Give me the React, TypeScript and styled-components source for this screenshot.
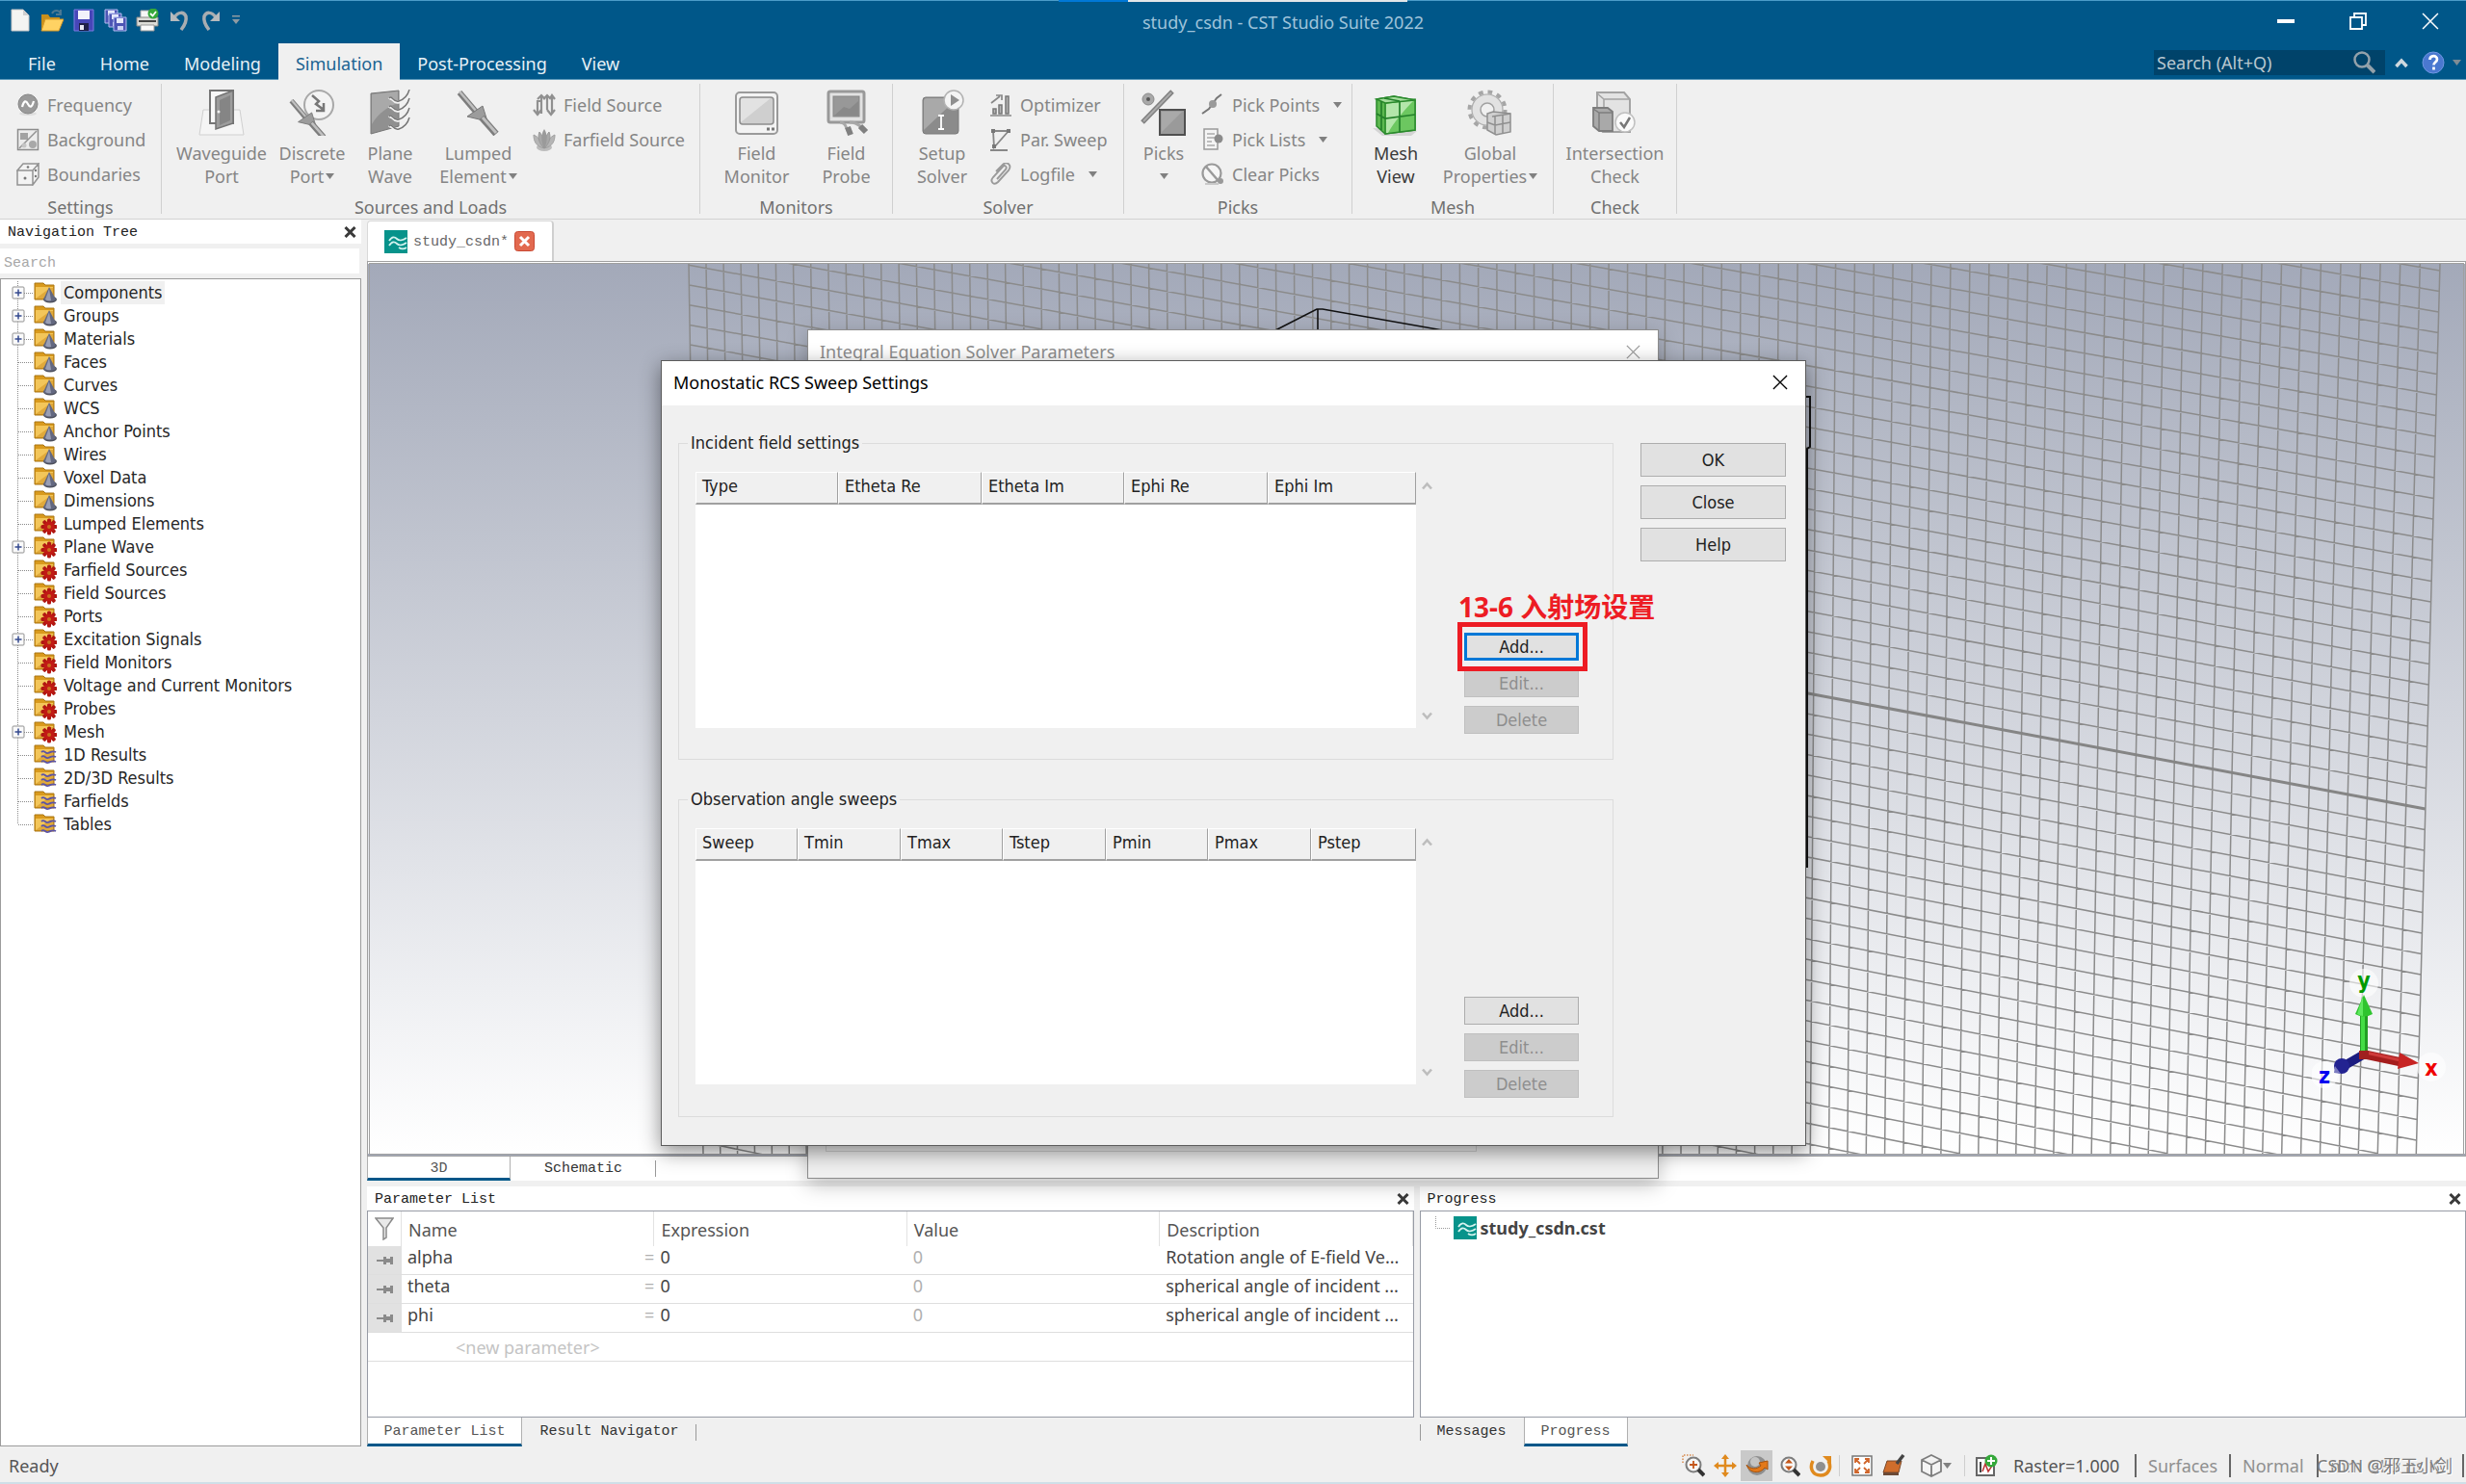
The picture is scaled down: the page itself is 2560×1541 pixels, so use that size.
import React from "react";
import styled, { createGlobalStyle, css } from "styled-components";

const UI = '"Noto Sans", "Open Sans", "Noto Sans CJK SC", sans-serif';
const FORM = '"DejaVu Sans Condensed", "DejaVu Sans", sans-serif';
const MONO = '"Liberation Mono", "DejaVu Sans Mono", monospace';
const BLUE = "#005789";

const GlobalStyle = createGlobalStyle`
  *, *::before, *::after { box-sizing: border-box; }
  body { margin: 0; background: #f0f0f0; }
  button, input { font: inherit; color: inherit; }
  button { background: none; border: 0; padding: 0; margin: 0; }
  svg { display: block; flex: none; }
`;

/* ---------- shell ---------- */

const Shell = styled.div`
  position: relative;
  display: flex;
  flex-direction: column;
  height: 100vh;
  min-height: 1240px;
  overflow: hidden;
  background: #f0f0f0;
  font: 18px/24px ${UI};
  color: #444;
`;

const Accent = styled.div`
  position: absolute;
  top: 0;
  left: 0;
  right: 0;
  height: 2px;
  display: flex;
  justify-content: center;
  border-top: 1px solid #4b9cc9;
`;
const AccentPiece = styled.i<{ $w: number; $c: string }>`
  width: ${(p) => p.$w}px;
  height: 2px;
  margin-top: -1px;
  background: ${(p) => p.$c};
`;

const Header = styled.header`
  background: ${BLUE};
  color: #dbe9f2;
`;
const TitleRow = styled.div`
  display: flex;
  height: 45px;
`;
const QuickBar = styled.div`
  display: flex;
  align-items: center;
  height: 42px;
  padding-left: 4px;
`;
const QuickButton = styled.button<{ $narrow?: boolean }>`
  display: flex;
  justify-content: center;
  width: ${(p) => (p.$narrow ? 20 : 33)}px;
`;
const AppTitle = styled.h1`
  flex: 1;
  margin: 0;
  padding-left: 74px;
  font-size: 18px;
  font-weight: 400;
  line-height: 46px;
  text-align: center;
  color: #9fc3da;
`;
const WindowButton = styled.button`
  display: flex;
  justify-content: center;
  align-items: center;
  width: 75px;
  height: 44px;
`;

const TabRow = styled.div`
  display: flex;
  height: 38px;
  border-bottom: 1px solid #5a98ba;
`;
const RibbonTabs = styled.nav`
  display: flex;
  flex: 1;
`;
const RibbonTab = styled.button<{ $active?: boolean; $file?: boolean }>`
  height: 38px;
  padding: 3px 18px 0;
  ${(p) => p.$file && "padding-left: 29px; padding-right: 28px;"}
  background: ${(p) => (p.$active ? "#f0f0f0" : "transparent")};
  color: ${(p) => (p.$active ? "#1b6492" : "#e6f0f6")};
`;
const CommandTools = styled.div`
  display: flex;
  align-items: center;
  height: 40px;
  padding-right: 2px;
`;
const CommandSearch = styled.label`
  display: flex;
  align-items: center;
  width: 240px;
  height: 26px;
  padding: 0 10px 0 3px;
  background: #00436a;
  input {
    flex: 1;
    min-width: 0;
    padding: 0;
    border: 0;
    background: none;
    color: #b9c7d0;
  }
  input::placeholder { color: #b9c7d0; opacity: 1; }
`;
const ToolButton = styled.button<{ $w: number }>`
  display: flex;
  justify-content: center;
  width: ${(p) => p.$w}px;
`;

/* ---------- ribbon ---------- */

const Ribbon = styled.div`
  display: flex;
  height: 145px;
  border-bottom: 1px solid #d2d2d2;
  color: #858585;
`;
const Group = styled.section<{ $w: number }>`
  display: flex;
  flex-direction: column;
  width: ${(p) => p.$w}px;
  padding-top: 8px;
`;
const GroupBody = styled.div<{ $pad: number }>`
  display: flex;
  flex: 1;
  padding-left: ${(p) => p.$pad}px;
`;
const GroupName = styled.div`
  line-height: 24px;
  text-align: center;
  color: #707070;
`;
const Divider = styled.i`
  width: 1px;
  margin: 4px 0 5px;
  background: #d0d0d0;
`;
const BigButton = styled.button<{ $w: number; $live?: boolean }>`
  width: ${(p) => p.$w}px;
  height: 108px;
  display: flex;
  flex-direction: column;
  align-items: center;
  line-height: 24px;
  color: ${(p) => (p.$live ? "#3a3a3a" : "inherit")};
  > svg:first-child { margin: 2px 0 6px; }
`;
const Line = styled.span`
  display: flex;
  align-items: center;
  gap: 2px;
  height: 24px;
  white-space: nowrap;
`;
const SmallColumn = styled.div<{ $pad?: number }>`
  display: flex;
  flex-direction: column;
  padding-left: ${(p) => p.$pad || 0}px;
`;
const SmallButton = styled.button`
  display: flex;
  align-items: center;
  height: 36px;
  gap: 8px;
  white-space: nowrap;
  svg + span + svg { margin-left: 6px; }
`;

/* ---------- workspace ---------- */

const Workspace = styled.div`
  display: flex;
  flex: 1;
  min-height: 0;
  gap: 6px;
`;
const NavPanel = styled.aside`
  display: flex;
  flex-direction: column;
  width: 375px;
  gap: 5px;
`;
const PanelHeader = styled.div`
  display: flex;
  align-items: center;
  justify-content: space-between;
  height: 25px;
  padding: 0 5px 0 8px;
  background: #fff;
  font: 15px/24px ${MONO};
  color: #222;
`;
const PanelName = styled.h2`
  margin: 0;
  padding-top: 2px;
  font: inherit;
`;
const NavSearch = styled.input`
  height: 26px;
  margin-right: 2px;
  padding: 4px 4px 0;
  border: 0;
  background: #fff;
  font: 15px/22px ${MONO};
  &::placeholder { color: #a8a8a8; opacity: 1; }
`;
const Tree = styled.ul`
  flex: 1;
  margin: 0;
  padding: 2px 0 0 11px;
  list-style: none;
  background: #fff;
  border: 1px solid #9c9c9c;
  font: 18px/24px ${FORM};
  color: #262626;
`;
const TreeItem = styled.li`
  display: flex;
  align-items: center;
  height: 24px;
`;
const TreeLabel = styled.span<{ $current?: boolean }>`
  margin-left: 4px;
  padding: 0 3px;
  background: ${(p) => (p.$current ? "#f0f0f0" : "transparent")};
`;

const MainColumn = styled.main`
  display: flex;
  flex: 1;
  flex-direction: column;
  min-width: 0;
`;
const DocTabs = styled.div`
  display: flex;
  height: 43px;
  padding-top: 1px;
`;
const DocTab = styled.div`
  display: flex;
  align-items: center;
  gap: 6px;
  padding: 0 18px 0 17px;
  background: #fff;
  border: 1px solid #d9d9d9;
  border-right: 2px solid #cfcfcf;
  border-bottom: 0;
  border-radius: 4px 4px 0 0;
  font: 15px/24px ${MONO};
  color: #666;
  span { padding-top: 2px; }
`;
const Viewport = styled.div`
  position: relative;
  flex: 1;
  min-height: 0;
  border: 3px double #a0a0a0;
  background: linear-gradient(#a3a9b9, #ffffff);
  overflow: hidden;
`;
const SceneSvg = styled.svg`
  width: 100%;
  height: 100%;
`;
const Triad = styled.svg`
  position: absolute;
  right: 17px;
  bottom: 64px;
`;
const ViewTabs = styled.div`
  display: flex;
  height: 25px;
  margin-bottom: 6px;
  background: #fff;
`;
const PageTab = styled.button<{ $active?: boolean; $w: number; $edge?: "left" | "right" }>`
  width: ${(p) => p.$w}px;
  font: 15px/22px ${MONO};
  ${(p) =>
    p.$active
      ? css`
          padding-top: 2px;
          background: #fff;
          border: 1px solid #b0b0b0;
          border-top: 0;
          border-bottom: 3px solid ${BLUE};
          color: #555;
        `
      : css`
          color: #333;
          background: linear-gradient(#999, #999) ${p.$edge || "right"} center / 1px 17px no-repeat;
        `}
`;

const Docks = styled.div`
  display: flex;
  gap: 6px;
  height: 270px;
`;
const Dock = styled.section`
  display: flex;
  flex: 1;
  flex-direction: column;
  min-width: 0;
`;
const DockBody = styled.div`
  flex: 1;
  border: 1px solid #979ba5;
  background: #fff;
`;
const DockTabs = styled.div`
  display: flex;
  height: 30px;
`;

const ParamTable = styled.table`
  width: 100%;
  table-layout: fixed;
  border-collapse: separate;
  border-spacing: 0;
  line-height: 24px;
  th, td {
    padding: 0 6px;
    text-align: left;
    font-weight: 400;
    white-space: nowrap;
  }
  th {
    height: 36px;
    padding: 2px 6px 0 7px;
    border-right: 1px solid #e2e2e2;
    color: #555;
  }
  td {
    height: 30px;
    padding-bottom: 6px;
    border-bottom: 1px solid #dedede;
    line-height: 23px;
  }
`;
const IconHead = styled.th`
  && { padding: 0 0 0 7px; }
`;
const PinCell = styled.td`
  && {
    padding: 0 0 0 9px;
    background: #e1e1e1;
  }
`;
const DescCell = styled.td`
  && { padding-right: 0; }
`;
const MutedCell = styled.td`
  color: #b0b0b0;
`;
const NameCell = styled.td`
  && { padding-right: 0; }
`;
const NameLine = styled.div`
  display: flex;
  justify-content: space-between;
  i { font-style: normal; color: #b0b0b0; }
`;
const NewCell = styled.td`
  && {
    height: 30px;
    padding: 2px 0 0 91px;
    color: #c4c4c4;
  }
`;
const ProgressRow = styled.div`
  display: flex;
  align-items: center;
  padding: 5px 0 0 15px;
  gap: 4px;
  font-weight: 700;
  color: #444;
`;

/* ---------- status bar ---------- */

const StatusBar = styled.footer`
  position: relative;
  display: flex;
  align-items: center;
  height: 39px;
  padding: 2px 2px 0 9px;
  border-bottom: 2px solid #cfdfe8;
  color: #555;
`;
const StatusText = styled.span`
  flex: 1;
`;
const StatusButton = styled.button<{ $on?: boolean; $w?: number }>`
  display: flex;
  justify-content: center;
  align-items: center;
  width: ${(p) => p.$w || 33}px;
  height: 32px;
  background: ${(p) => (p.$on ? "#c9c9c9" : "transparent")};
`;
const StatusLine = styled.i`
  width: 1px;
  height: 22px;
  margin: 0 6px 0 3px;
  background: #cfcfcf;
`;
const StatusField = styled.span<{ $w: number; $dim?: boolean }>`
  width: ${(p) => p.$w}px;
  padding-left: 12px;
  border-right: 2px solid #666;
  white-space: nowrap;
  color: ${(p) => (p.$dim ? "#8f8f8f" : "#555")};
`;
const Watermark = styled.span`
  position: absolute;
  right: 14px;
  top: 7px;
  font: 18px/26px ${UI};
  color: #7d7d7d;
  text-shadow: 1px 1px 0 #fff;
`;

/* ---------- dialogs ---------- */

const DialogFrame = styled.section<{ $x: number; $y: number; $w: number; $h?: number; $back?: boolean }>`
  position: absolute;
  left: ${(p) => p.$x}px;
  top: ${(p) => p.$y}px;
  width: ${(p) => p.$w}px;
  ${(p) => p.$h && `height: ${p.$h}px;`}
  display: flex;
  flex-direction: column;
  background: #f0f0f0;
  border: 1px solid ${(p) => (p.$back ? "#8c8c8c" : "#5c5c5c")};
  box-shadow: 0 6px 20px rgba(0, 0, 0, ${(p) => (p.$back ? 0.25 : 0.45)});
`;
const DialogTitle = styled.div<{ $back?: boolean }>`
  display: flex;
  align-items: center;
  justify-content: space-between;
  height: 46px;
  padding: 0 18px 2px 12px;
  background: #fff;
  color: ${(p) => (p.$back ? "#8e8e8e" : "#000")};
  h2 { margin: 0; font: inherit; }
`;
const BackBody = styled.div`
  flex: 1;
  margin: 12px 188px 27px 18px;
  border: 1px solid #d2d2d2;
`;
const DialogBody = styled.div`
  display: flex;
  gap: 28px;
  padding: 28px 20px 29px 17px;
  font: 18px/22px ${FORM};
  color: #222;
`;
const Groups = styled.div`
  display: flex;
  flex: 1;
  flex-direction: column;
  gap: 30px;
`;
const Fieldset = styled.fieldset<{ $end: number }>`
  margin: 0;
  padding: 19px 35px ${(p) => p.$end}px 9px;
  border: 1px solid #dcdcdc;
  legend { padding: 0 3px; line-height: 22px; }
`;
const FieldRow = styled.div<{ $h: number }>`
  display: flex;
  height: ${(p) => p.$h}px;
  padding-left: 8px;
`;
const ListFrame = styled.div`
  flex: 1;
  height: 266px;
  background: #fff;
`;
const ListTable = styled.table`
  width: 100%;
  table-layout: fixed;
  border-collapse: separate;
  border-spacing: 0;
  th {
    height: 34px;
    padding: 0 0 3px 6px;
    text-align: left;
    font-weight: 400;
    background: #f0f0f0;
    border: 1px solid #fff;
    border-right-color: #a0a0a0;
    border-bottom: 2px solid #a0a0a0;
  }
`;
const Gutter = styled.div`
  display: flex;
  flex-direction: column;
  justify-content: space-between;
  align-items: center;
  width: 23px;
  height: 265px;
  padding: 10px 0 7px;
  margin-right: 27px;
`;
const ButtonStack = styled.div`
  display: flex;
  flex-direction: column;
  justify-content: flex-end;
  width: 119px;
  gap: 9px;
`;
const SideButtons = styled.div`
  display: flex;
  flex-direction: column;
  gap: 9px;
  width: 151px;
  padding-top: 11px;
`;
const PushButton = styled.button<{ $h?: number; $focus?: boolean }>`
  width: 100%;
  height: ${(p) => p.$h || 29}px;
  border: 1px solid #adadad;
  background: #e1e1e1;
  line-height: 22px;
  ${(p) => p.$focus && "border: 3px solid #0078d7;"}
  &:disabled {
    border-color: #bfbfbf;
    background: #cccccc;
    color: #8e8e8e;
  }
`;
const Marked = styled.div`
  position: relative;
`;
const MarkBox = styled.i`
  position: absolute;
  z-index: 1;
  inset: -11px -9px -11px -7px;
  border: 5px solid #ed1c24;
  pointer-events: none;
`;
const MarkText = styled.strong`
  position: absolute;
  left: -6px;
  bottom: 39px;
  font: 700 28px/34px "Noto Sans", "Noto Sans CJK SC", sans-serif;
  color: #ed1c24;
  white-space: nowrap;
`;

/* ---------- icons ---------- */

const Caret = ({ c = "#808080" }: { c?: string }) => (
  <svg width="9" height="6" viewBox="0 0 9 6"><path d="M0 0h9L4.500 6z" fill={c} /></svg>
);
const BoldX = () => (
  <svg width="13" height="12" viewBox="0 0 13 12"><path d="M1.500 1l10 10M11.500 1l-10 10" stroke="#3a3a3a" strokeWidth="3" /></svg>
);
const ThinX = ({ c, s = 17 }: { c: string; s?: number }) => (
  <svg width={s} height={s} viewBox="0 0 17 17"><path d="M1 1l15 15M16 1L1 16" stroke={c} strokeWidth="1.400" /></svg>
);
const Chevron = ({ down }: { down?: boolean }) => (
  <svg width="11" height="9" viewBox="0 0 11 9">
    <path d={down ? "M1 1.500l4.500 5 4.500-5" : "M1 7.500l4.500-5 4.500 5"} fill="none" stroke="#bdbdbd" strokeWidth="2.600" />
  </svg>
);
const Small = ({ children, s = 24 }: { children: React.ReactNode; s?: number }) => (
  <svg width={s} height={s} viewBox="0 0 24 24" fill="none">{children}</svg>
);
const Big = ({ children }: { children: React.ReactNode }) => (
  <svg width="48" height="48" viewBox="0 0 48 48" fill="none">{children}</svg>
);

const CstLogo = () => (
  <svg width="24" height="24" viewBox="0 0 24 24" fill="none">
    <path d="M0 0h24v24H0z" fill="#07938b" />
    <path d="M5 11c3-5 6-4 8-2s6 2 10-1" stroke="#d5f3ef" strokeWidth="1.800" />
    <path d="M5 16c3-5 6-4 8-2s6 2 10-1" stroke="#d5f3ef" strokeWidth="1.800" />
    <path d="M15 18c3 2 5 2 8 0" stroke="#d5f3ef" strokeWidth="1.800" />
  </svg>
);

const NewIcon = () => <Small><path d="M3 1h12l6 6v16H3z" fill="#f4f4f2" stroke="#c8c8c8" /><path d="M15 1v6h6z" fill="#cfcfcf" /></Small>;
const OpenIcon = () => (
  <Small>
    <path d="M1 6h7l2 3h10v13H1z" fill="#c88f1c" />
    <path d="M5 11h19l-5 12H1z" fill="#ffd263" stroke="#d89c28" />
    <path d="M12 5c2-4 7-4 9 0M21 1v5h-5" stroke="#4b7893" strokeWidth="2" />
  </Small>
);
const SaveIcon = () => (
  <Small>
    <path d="M2 1h20v22H2z" fill="#4746b8" stroke="#7a7ae0" />
    <path d="M6 2h12v9H6z" fill="#f2f2fb" /><path d="M7 15h10v8H7z" fill="#20204a" /><path d="M8 17h4v5H8z" fill="#e8e8f5" />
  </Small>
);
const SaveAllIcon = () => (
  <Small>
    {[[1, 1], [5, 5], [10, 9]].map(([x, y]) => (
      <g key={x}><path d={`M${x} ${y}h13v14h-13z`} fill="#4d55b5" stroke="#b4bdf0" /><path d={`M${x + 3} ${y + 1}h7v5h-7z`} fill="#e4e8fb" /><path d={`M${x + 4} ${y + 9}h6v4h-6z`} fill="#cbd2f4" /></g>
    ))}
  </Small>
);
const PrintIcon = () => (
  <Small>
    <path d="M5 2h11v8H5z" fill="#f6f6f6" stroke="#aaa" /><path d="M1 9h22v9H1z" fill="#dcdcd8" stroke="#8a8a86" />
    <path d="M3 12h18v2H3z" fill="#444" /><path d="M5 17h14v6H5z" fill="#fafafa" stroke="#999" />
    <circle cx="18" cy="5" r="5.500" fill="#35a83a" /><path d="M15 5l2.500 2.500L21 3" stroke="#fff" strokeWidth="1.800" />
  </Small>
);
const UndoIcon = ({ flip }: { flip?: boolean }) => (
  <Small>
    <g transform={flip ? "translate(24 0) scale(-1 1)" : undefined}>
      <path d="M7 9c4-6 10-6 12-1 1 5-1 9-5 14" stroke="#a8adb1" strokeWidth="3.500" />
      <path d="M3 3v10h10z" fill="#b6babd" />
    </g>
  </Small>
);

const quick: [string, React.ReactNode][] = [
  ["New", <NewIcon />], ["Open", <OpenIcon />], ["Save", <SaveIcon />], ["Save all", <SaveAllIcon />],
  ["Print", <PrintIcon />], ["Undo", <UndoIcon />], ["Redo", <UndoIcon flip />],
];

const FrequencyIcon = () => <Small><ellipse cx="12" cy="21" rx="9" ry="2" fill="#dedede" /><circle cx="12" cy="11" r="10" fill="#9a9a9a" stroke="#858585" /><path d="M6 14c2-7 4-7 6-3s4 4 6-3" stroke="#fff" strokeWidth="2.200" /></Small>;
const BackgroundIcon = () => <Small><path d="M1.500 1.500h21v21h-21z" fill="#ececec" stroke="#8c8c8c" strokeWidth="1.500" /><path d="M4 5h8v7H4z" fill="#a2a2a2" /><path d="M3 21L21 3" stroke="#909090" strokeWidth="1.500" /><circle cx="17" cy="17" r="4" fill="#a8a8a8" /><circle cx="8" cy="18" r="2.500" fill="#c6c6c6" /></Small>;
const BoundariesIcon = () => <Small><path d="M1 8l6-7h16l-6 7zM1 8h16v15H1zM17 8l6-7v14l-6 8z" fill="#f3f3f3" stroke="#939393" strokeWidth="1.500" /><circle cx="9" cy="16" r="1.500" fill="#777" /><circle cx="12" cy="4.500" r="1.300" fill="#777" /><circle cx="20" cy="8" r="1.200" fill="#777" /><circle cx="20" cy="14" r="1.200" fill="#777" /></Small>;
const WaveguideIcon = () => (
  <Big>
    <path d="M5 21h38l4 26H1z" fill="#f5f5f5" stroke="#d0d0d0" />
    <path d="M12 1h24v34H12z" fill="#f8f8f8" stroke="#757575" strokeWidth="2" />
    <path d="M18 8L36 1v34l-18 6z" fill="#9c9c9c" stroke="#737373" strokeWidth="1.500" />
    <path d="M22 11l11-5v26l-11 5z" fill="#858585" /><circle cx="21" cy="23" r="1.500" fill="#f2f2f2" />
  </Big>
);
const Probe = () => (
  <>
    <path d="M4 3l17 20" stroke="#7d7d7d" strokeWidth="6" /><path d="M4 2l17 20" stroke="#c0c0c0" strokeWidth="2.500" />
    <path d="M12 28l16-11 5 16z" fill="#9c9c9c" stroke="#777" />
    <path d="M27 29l15 17" stroke="#7d7d7d" strokeWidth="7" /><path d="M28 29l14 16" stroke="#c0c0c0" strokeWidth="3" />
  </>
);
const DiscreteIcon = () => (
  <Big>
    <circle cx="31" cy="16" r="15" fill="#f3f3f3" stroke="#a8a8a8" strokeWidth="2" />
    <path d="M24 6l7 6-3 3 8 6M36 14v8h-8" stroke="#777" strokeWidth="2.500" />
    <g transform="translate(-1 9) scale(.88)"><Probe /></g>
  </Big>
);
const PlaneWaveIcon = () => (
  <Big>
    <path d="M4 4l29-3v37L4 46z" fill="#909090" stroke="#767676" /><path d="M5 5l27-3v12C22 18 12 24 5 36z" fill="#a9a9a9" />
    {[1, 10, 20, 30].map((y) => <path key={y} d={`M23 ${y + 9}c3-4 4 5 10 3s9-5 11-12`} stroke="#f2f2f2" strokeWidth="3" />)}
    {[1, 10, 20, 30].map((y) => <path key={y} d={`M23 ${y + 8}c3-4 4 5 10 3s9-5 11-12`} stroke="#757575" strokeWidth="1.500" />)}
  </Big>
);
const LumpedIcon = () => <Big><Probe /></Big>;
const FieldSourceIcon = () => <Small><g stroke="#909090" strokeWidth="2.200"><path d="M5 21V8h4V3M20 21v-8M9 21V6M15 17V3M20 3v10" /><path d="M5 6l4-4 4 4M11 6l4-4 3 3 2-3 3 4M1 17l4 5 4-5M15 17l4 5 4-5" /></g></Small>;
const FarfieldIcon = () => (
  <Small>
    <ellipse cx="12" cy="20" rx="8" ry="4" fill="#bcbcbc" />
    <path d="M12 21C3 19 1 13 1 7c5 2 9 8 11 14zM12 21c9-2 11-8 11-14-5 2-9 8-11 14z" fill="#b5b5b5" stroke="#a0a0a0" />
    <path d="M12 21C6 15 5 9 7 4c3 3 5 10 5 17zM12 21c6-6 7-12 5-17-3 3-5 10-5 17z" fill="#a8a8a8" stroke="#989898" />
    <path d="M12 21C8 14 9 5 12 1c3 4 4 13 0 20z" fill="#9a9a9a" />
  </Small>
);
const MonitorIcon = () => <Big><rect x="2" y="3" width="43" height="43" rx="4" fill="#f3f3f3" stroke="#9a9a9a" strokeWidth="2" /><rect x="6" y="8" width="35" height="28" rx="3" fill="#cfcfcf" stroke="#8d8d8d" strokeWidth="1.500" /><path d="M7 34L38 9H9q-2 0-2 2z" fill="#e2e2e2" /><path d="M34 41h3M39 41h3" stroke="#777" strokeWidth="3" /></Big>;
const FieldProbeIcon = () => <Big><rect x="5" y="2" width="37" height="32" rx="2" fill="#e2e2e2" stroke="#999" strokeWidth="3" /><rect x="10" y="7" width="27" height="21" fill="#989898" stroke="#858585" /><path d="M11 27l10-9 6 2 9-8v15z" fill="#898989" /><path d="M17 34c5 0 6 4 8 9M27 34c6 0 8 2 14 6" stroke="#a8a8a8" strokeWidth="3" /><path d="M25 39l3 8M38 38l6 6" stroke="#808080" strokeWidth="6" /></Big>;
const SetupIcon = () => <Big><rect x="4" y="8" width="37" height="38" rx="3" fill="#8b8b8b" stroke="#7a7a7a" /><path d="M5 42L40 9H8q-3 0-3 3z" fill="#a9a9a9" /><path d="M20 27h6M23 27v14M20 41h6" stroke="#fff" strokeWidth="1.800" /><circle cx="36" cy="11" r="10" fill="#f4f4f4" stroke="#b2b2b2" strokeWidth="1.500" /><path d="M33 5l9 6-9 6z" fill="#8f8f8f" /></Big>;
const OptimizerIcon = () => <Small><path d="M4 16h3v5H4zM10 12h3v9h-3zM17 3h3v18h-3z" fill="#b5b5b5" stroke="#777" strokeWidth="1.500" /><path d="M2 10l9-7M7 2h6v5M1 23h22" stroke="#888" strokeWidth="1.700" /></Small>;
const SweepIcon = () => <Small><path d="M4 3h16L5 20zM1 23h18" stroke="#888" strokeWidth="1.800" /><path d="M2 1h4v4H2zM18 1h4v4h-4zM3 17h4v4H3z" fill="#777" /></Small>;
const ClipIcon = () => <Small><path d="M8 17l9-10c2-3-1-5-3-3L4 15c-4 5 1 9 5 5L20 8c4-6-2-10-6-6L7 9" stroke="#9a9a9a" strokeWidth="1.900" /></Small>;
const PicksIcon = () => <Big><circle cx="8" cy="10" r="6" fill="#a8a8a8" stroke="#8a8a8a" /><circle cx="8" cy="10" r="2" fill="#555" /><path d="M2 34L33 2" stroke="#808080" strokeWidth="5" /><path d="M3 33L32 3" stroke="#aaa" strokeWidth="2" /><path d="M20 21h26v26H20z" fill="#9a9a9a" stroke="#505050" strokeWidth="2" /><path d="M22 44V23h21z" fill="#a9a9a9" /></Big>;
const PickPointsIcon = () => <Small><path d="M1 21l7-5 8-11 5-4" stroke="#777" strokeWidth="2" /><circle cx="12" cy="11" r="4" fill="#9a9a9a" /></Small>;
const PickListsIcon = () => <Small><path d="M3 1h14v21H3z" fill="#f4f4f4" stroke="#999" strokeWidth="1.500" /><path d="M6 6h8M6 10h8M6 14h5M6 18h8" stroke="#aaa" strokeWidth="1.500" /><circle cx="18" cy="11" r="4.500" fill="#8b8b8b" /></Small>;
const ClearIcon = () => <Small><circle cx="11" cy="11" r="9.500" fill="#f5f5f5" stroke="#999" strokeWidth="2.200" /><path d="M5 4l13 15" stroke="#999" strokeWidth="2.500" /><circle cx="20" cy="19" r="3" fill="#999" /><path d="M4 22h14" stroke="#c9c9c9" strokeWidth="2" /></Small>;
const MeshIcon = () => (
  <Big>
    <path d="M0 40l10 8h30l6-5z" fill="#d4d4d4" />
    <path d="M4 10l18-3 22 4v31L13 46 4 38z" fill="#5cb84f" stroke="#2a8a2c" strokeWidth="1.500" />
    <path d="M13 14l31-4v32l-31 4z" fill="#6cc760" stroke="#2a8a2c" strokeWidth="1.500" />
    <path d="M14 15l29-4C34 20 22 34 16 45h-2z" fill="#b3e6aa" />
    <path d="M4 10l18-3 22 4-31 3z" fill="#a5dd9c" stroke="#2a8a2c" strokeWidth="1.500" />
    <path d="M28 12v32M4 25l9 5 31-4M9 12v30M12 9l16 3" stroke="#23802a" strokeWidth="1.700" />
  </Big>
);
const GlobalIcon = () => (
  <Big>
    <circle cx="21" cy="21" r="18" stroke="#a6a6a6" strokeWidth="5" strokeDasharray="4.600 4.820" />
    <circle cx="21" cy="21" r="12" stroke="#e2e2e2" strokeWidth="9" /><circle cx="21" cy="21" r="16" stroke="#adadad" strokeWidth="1.200" /><circle cx="21" cy="21" r="7" stroke="#a0a0a0" strokeWidth="1.500" />
    <path d="M21 25l6-2 18 2v19l-15 3-9-5z" fill="#cfcfcf" stroke="#909090" strokeWidth="1.500" /><path d="M26 28l19-3M29 27v19M37 26v19M21 34l8 3 16-3" stroke="#8f8f8f" strokeWidth="1.500" />
  </Big>
);
const IntersectIcon = () => (
  <Big>
    <path d="M5 3h28l6 7v34H11L5 38z" fill="#e3e3e3" stroke="#a3a3a3" strokeWidth="2" /><path d="M5 4l7 6h27M12 10v33" stroke="#a3a3a3" strokeWidth="1.500" />
    <path d="M1 19h15l5 4v20H7l-6-5z" fill="#a9a9a9" stroke="#7d7d7d" strokeWidth="1.800" /><path d="M1 20l6 4h14M7 24v18" stroke="#7d7d7d" strokeWidth="1.500" />
    <circle cx="34" cy="34" r="10" fill="#fafafa" stroke="#c0c0c0" strokeWidth="1.500" /><path d="M29 34l4 5 6-10" stroke="#777" strokeWidth="2.500" />
  </Big>
);

const FolderIcon = ({ kind }: { kind: string }) => (
  <svg width="24" height="24" viewBox="0 0 24 24" fill="none">
    <path d="M1 2h9l2 2h9v15H1z" fill="#d99a1d" stroke="#a97413" />
    <path d="M2 6h18v12H2z" fill="#f3c65a" /><path d="M2 18L17 7h3v11z" fill="#e0a93a" />
    {kind === "cone" && <><ellipse cx="17" cy="19" rx="7" ry="3.500" fill="#4c4f5b" /><path d="M16 6L10 19c3 3 10 3 13 0z" fill="#636880" /><path d="M16 8l-4 11c2 1.500 4 1.500 6 1z" fill="#9a9fb4" /></>}
    {kind === "gear" && (
      <>
        <g fill="#b01712">
          {[0, 45, 90, 135].map((a) => <rect key={a} x="14" y="6.500" width="4" height="17" rx="1.500" transform={`rotate(${a} 16 15)`} />)}
        </g>
        <circle cx="16" cy="15" r="5.500" fill="#c11a15" /><circle cx="16" cy="15" r="2" fill="#c9731f" />
      </>
    )}
    {kind === "wave" && [8, 13, 18].map((y) => <path key={y} d={`M8 ${y + 1}c3-3 4 2 7 1s4-3 8-1`} stroke="#5b53a6" strokeWidth="1.800" />)}
  </svg>
);
const Guide = ({ plus, last }: { plus: boolean; last: boolean }) => (
  <svg width="23" height="24" viewBox="0 0 23 24" fill="none">
    <path d={`M6.500 0V${last ? 12 : 24}M7 12.500h16`} stroke="#8a8a8a" strokeDasharray="1 1" />
    {plus && <><rect x="1" y="6" width="12" height="12" rx="1" fill="#fafafa" stroke="#919191" /><path d="M3.500 12h7M7 8.500v7" stroke="#34498f" strokeWidth="1.500" /></>}
  </svg>
);

/* ---------- 3D scene ---------- */

const SceneGrid = () => {
  const W = 2173;
  const H = 924;
  const cols = Array.from({ length: 95 }, (_, i) => {
    const top = 331 + 18 * i + 0.01426 * i * i;
    const bottom = 346 + 17.8 * i + 0.0119 * i * i;
    return `M${top.toFixed(1)} 0L${bottom.toFixed(1)} ${H}`;
  }).join("");
  const rowPath = (j: number) => {
    const yl = 229 + 20.7 * j;
    const yr = 566 + 21.5 * j;
    const xl = 331 + (15 * yl) / H;
    const xr = 2149 - (25 * yr) / H;
    return `M${xl.toFixed(1)} ${yl.toFixed(1)}L${xr.toFixed(1)} ${yr.toFixed(1)}`;
  };
  const rows = Array.from({ length: 62 }, (_, k) => rowPath(k - 27)).join("");
  return (
    <SceneSvg viewBox={`0 0 ${W} ${H}`} preserveAspectRatio="none" fill="none">
      <path d={cols + rows} stroke="#8b8b8b" strokeWidth="1.500" />
      <path d={rowPath(0)} stroke="#858585" strokeWidth="3" />
      <path d="M940 69l43-22h6l125 22M984 47v40" stroke="#111" strokeWidth="1.600" />
      <path d="M1480 138h15v52l-3 2v435" stroke="#111" strokeWidth="2" />
    </SceneSvg>
  );
};

const AxisTriad = () => (
  <Triad width="140" height="130" viewBox="0 0 140 130" fill="none">
    <circle cx="54" cy="17" r="15" fill="#fff" opacity=".6" /><circle cx="124" cy="104" r="15" fill="#fff" opacity=".6" /><circle cx="13" cy="112" r="14" fill="#fff" opacity=".6" />
    <path d="M54 91V48" stroke="#23a023" strokeWidth="8" /><path d="M53 91V48" stroke="#45dd45" strokeWidth="4" />
    <path d="M54 29l9 20q-9 5-18 0z" fill="#2fc42f" /><path d="M53 30l-6 19q3 2 6 2z" fill="#5fe85f" />
    <path d="M55 91l38 8" stroke="#a51d1d" strokeWidth="9" /><path d="M56 89l36 8" stroke="#cf3b3b" strokeWidth="3" />
    <path d="M91 89l20 11-22 6z" fill="#c72424" />
    <path d="M52 92L33 103" stroke="#1c1c80" strokeWidth="9" /><circle cx="31" cy="103" r="8" fill="#232391" /><path d="M24 103l6 8-7-1z" fill="#7b7bc0" />
    <path d="M49 87h10v9H49z" fill="#a02020" />
    <g fontFamily='"DejaVu Sans Condensed", "DejaVu Sans", sans-serif' fontSize="23" fontWeight="700" textAnchor="middle">
      <text x="54" y="22" fill="#009a00">y</text>
      <text x="124" y="113" fill="#f00000">x</text>
      <text x="13" y="121" fill="#0000f0">z</text>
    </g>
  </Triad>
);

/* ---------- data ---------- */

const treeItems: [string, string, boolean?][] = [
  ["Components", "cone", true], ["Groups", "cone", true], ["Materials", "cone", true], ["Faces", "cone"],
  ["Curves", "cone"], ["WCS", "cone"], ["Anchor Points", "cone"], ["Wires", "cone"], ["Voxel Data", "cone"],
  ["Dimensions", "cone"], ["Lumped Elements", "gear"], ["Plane Wave", "gear", true], ["Farfield Sources", "gear"],
  ["Field Sources", "gear"], ["Ports", "gear"], ["Excitation Signals", "gear", true], ["Field Monitors", "gear"],
  ["Voltage and Current Monitors", "gear"], ["Probes", "gear"], ["Mesh", "gear", true], ["1D Results", "wave"],
  ["2D/3D Results", "wave"], ["Farfields", "wave"], ["Tables", "wave"],
];

const params = [
  ["alpha", "Rotation angle of E-field Ve..."],
  ["theta", "spherical angle of incident ..."],
  ["phi", "spherical angle of incident ..."],
];

const Tool = ({ icon, w, lines, arrow, live }: { icon: React.ReactNode; w: number; lines: string[]; arrow?: boolean; live?: boolean }) => (
  <BigButton $w={w} $live={live}>
    {icon}
    {lines.map((t, i) => <Line key={i}>{t}{arrow && i === lines.length - 1 && <Caret />}</Line>)}
  </BigButton>
);
const MiniTool = ({ icon, text, arrow }: { icon: React.ReactNode; text: string; arrow?: boolean }) => (
  <SmallButton>{icon}<span>{text}</span>{arrow && <Caret />}</SmallButton>
);

const SweepList = ({ columns, widths }: { columns: string[]; widths: number[] }) => (
  <>
    <ListFrame>
      <ListTable>
        <colgroup>{columns.map((c, i) => <col key={c} width={widths[i]} />)}</colgroup>
        <thead><tr>{columns.map((c) => <th key={c}>{c}</th>)}</tr></thead>
      </ListTable>
    </ListFrame>
    <Gutter><Chevron /><Chevron down /></Gutter>
  </>
);

const ZoomGlyph = ({ children }: { children?: React.ReactNode }) => (
  <Small><circle cx="12" cy="11" r="7.500" fill="#f7f7f7" stroke="#7d7d7d" strokeWidth="2" /><path d="M17 16l6 6" stroke="#333" strokeWidth="4" />{children}</Small>
);

export default function App() {
  return (
    <Shell>
      <GlobalStyle />
      <Header>
        <TitleRow>
          <QuickBar>
            {quick.map(([name, icon]) => <QuickButton key={name} aria-label={name}>{icon}</QuickButton>)}
            <QuickButton $narrow aria-label="Customize">
              <svg width="8" height="10" viewBox="0 0 8 10"><path d="M0 0h8v1.500H0zM0 4h8L4 9z" fill="#8f9ba2" /></svg>
            </QuickButton>
          </QuickBar>
          <AppTitle>study_csdn - CST Studio Suite 2022</AppTitle>
          <WindowButton aria-label="Minimize"><svg width="18" height="4"><path d="M0 0h18v4H0z" fill="#fff" /></svg></WindowButton>
          <WindowButton aria-label="Restore"><svg width="18" height="18" viewBox="0 0 18 18" fill="none" stroke="#fff" strokeWidth="1.800"><path d="M1 5h12v12H1zM5 5V1h12v12h-4" /></svg></WindowButton>
          <WindowButton aria-label="Close"><ThinX c="#fff" s={18} /></WindowButton>
        </TitleRow>
        <TabRow>
          <RibbonTabs>
            <RibbonTab $file>File</RibbonTab>
            <RibbonTab>Home</RibbonTab>
            <RibbonTab>Modeling</RibbonTab>
            <RibbonTab $active>Simulation</RibbonTab>
            <RibbonTab>Post-Processing</RibbonTab>
            <RibbonTab>View</RibbonTab>
          </RibbonTabs>
          <CommandTools>
            <CommandSearch>
              <input aria-label="Search commands" placeholder="Search (Alt+Q)" />
              <Small><circle cx="10" cy="9" r="7.500" stroke="#93a1aa" strokeWidth="2.500" /><path d="M15 14l8 8" stroke="#93a1aa" strokeWidth="4" /></Small>
            </CommandSearch>
            <ToolButton $w={34} aria-label="Collapse ribbon"><svg width="14" height="11" viewBox="0 0 14 11"><path d="M1.500 9L7 3l5.500 6" fill="none" stroke="#cfd9df" strokeWidth="3.500" /></svg></ToolButton>
            <ToolButton $w={32} aria-label="Help">
              <Small><circle cx="12" cy="12" r="11" fill="#4a78d0" stroke="#6f97e2" /><path d="M8.500 9c0-5 7.500-5 7.500-.5 0 3-3.500 3-3.500 6M12.500 16.500v3" stroke="#fff" strokeWidth="2.700" /></Small>
            </ToolButton>
            <ToolButton $w={16} aria-label="Help options"><Caret c="#7f8c94" /></ToolButton>
          </CommandTools>
        </TabRow>
      </Header>
      <Accent><AccentPiece $w={72} $c="#0078d7" /><AccentPiece $w={290} $c="#e3e6e8" /></Accent>

      <Ribbon>
        <Group $w={167}>
          <GroupBody $pad={17}>
            <SmallColumn>
              <MiniTool icon={<FrequencyIcon />} text="Frequency" />
              <MiniTool icon={<BackgroundIcon />} text="Background" />
              <MiniTool icon={<BoundariesIcon />} text="Boundaries" />
            </SmallColumn>
          </GroupBody>
          <GroupName>Settings</GroupName>
        </Group>
        <Divider />
        <Group $w={558}>
          <GroupBody $pad={7}>
            <Tool w={110} icon={<WaveguideIcon />} lines={["Waveguide", "Port"]} />
            <Tool w={78} icon={<DiscreteIcon />} lines={["Discrete", "Port"]} arrow />
            <Tool w={84} icon={<PlaneWaveIcon />} lines={["Plane", "Wave"]} />
            <Tool w={99} icon={<LumpedIcon />} lines={["Lumped", "Element"]} arrow />
            <SmallColumn $pad={7}>
              <MiniTool icon={<FieldSourceIcon />} text="Field Source" />
              <MiniTool icon={<FarfieldIcon />} text="Farfield Source" />
            </SmallColumn>
          </GroupBody>
          <GroupName>Sources and Loads</GroupName>
        </Group>
        <Divider />
        <Group $w={199}>
          <GroupBody $pad={12}>
            <Tool w={93} icon={<MonitorIcon />} lines={["Field", "Monitor"]} />
            <Tool w={93} icon={<FieldProbeIcon />} lines={["Field", "Probe"]} />
          </GroupBody>
          <GroupName>Monitors</GroupName>
        </Group>
        <Divider />
        <Group $w={239}>
          <GroupBody $pad={5}>
            <Tool w={92} icon={<SetupIcon />} lines={["Setup", "Solver"]} />
            <SmallColumn $pad={3}>
              <MiniTool icon={<OptimizerIcon />} text="Optimizer" />
              <MiniTool icon={<SweepIcon />} text="Par. Sweep" />
              <MiniTool icon={<ClipIcon />} text="Logfile" arrow />
            </SmallColumn>
          </GroupBody>
          <GroupName>Solver</GroupName>
        </Group>
        <Divider />
        <Group $w={236}>
          <GroupBody $pad={2}>
            <Tool w={78} icon={<PicksIcon />} lines={["Picks", ""]} arrow />
            <SmallColumn>
              <MiniTool icon={<PickPointsIcon />} text="Pick Points" arrow />
              <MiniTool icon={<PickListsIcon />} text="Pick Lists" arrow />
              <MiniTool icon={<ClearIcon />} text="Clear Picks" />
            </SmallColumn>
          </GroupBody>
          <GroupName>Picks</GroupName>
        </Group>
        <Divider />
        <Group $w={208}>
          <GroupBody $pad={4}>
            <Tool w={82} icon={<MeshIcon />} lines={["Mesh", "View"]} live />
            <Tool w={114} icon={<GlobalIcon />} lines={["Global", "Properties"]} arrow />
          </GroupBody>
          <GroupName>Mesh</GroupName>
        </Group>
        <Divider />
        <Group $w={127}>
          <GroupBody $pad={0}>
            <Tool w={127} icon={<IntersectIcon />} lines={["Intersection", "Check"]} />
          </GroupBody>
          <GroupName>Check</GroupName>
        </Group>
        <Divider />
      </Ribbon>

      <Workspace>
        <NavPanel>
          <PanelHeader><PanelName>Navigation Tree</PanelName><button aria-label="Close navigation tree"><BoldX /></button></PanelHeader>
          <NavSearch aria-label="Search tree" placeholder="Search" />
          <Tree>
            {treeItems.map(([name, kind, plus], i) => (
              <TreeItem key={name}>
                <Guide plus={!!plus} last={i === treeItems.length - 1} />
                <FolderIcon kind={kind} />
                <TreeLabel $current={i === 0}>{name}</TreeLabel>
              </TreeItem>
            ))}
          </Tree>
        </NavPanel>

        <MainColumn>
          <DocTabs>
            <DocTab>
              <CstLogo />
              <span>study_csdn*</span>
              <button aria-label="Close document">
                <svg width="21" height="21" viewBox="0 0 21 21"><rect x=".5" y=".5" width="20" height="20" rx="3" fill="#e2694f" stroke="#c94a35" /><path d="M6 6l9 9M15 6l-9 9" stroke="#fff" strokeWidth="3" /></svg>
              </button>
            </DocTab>
          </DocTabs>
          <Viewport><SceneGrid /><AxisTriad /></Viewport>
          <ViewTabs>
            <PageTab $active $w={149}>3D</PageTab>
            <PageTab $w={151}>Schematic</PageTab>
          </ViewTabs>
          <Docks>
            <Dock>
              <PanelHeader><PanelName>Parameter List</PanelName><button aria-label="Close parameter list"><BoldX /></button></PanelHeader>
              <DockBody>
                <ParamTable>
                  <colgroup><col width={35} /><col /><col /><col /><col /></colgroup>
                  <thead>
                    <tr>
                      <IconHead aria-label="Filter"><svg width="20" height="24" viewBox="0 0 20 24"><path d="M1 1h18l-7 10v10l-3 2V11z" fill="#e9e9e9" stroke="#8a8a8a" strokeWidth="1.500" /></svg></IconHead>
                      <th>Name</th><th>Expression</th><th>Value</th><th>Description</th>
                    </tr>
                  </thead>
                  <tbody>
                    {params.map(([name, desc]) => (
                      <tr key={name}>
                        <PinCell><svg width="18" height="11" viewBox="0 0 18 11"><path d="M0 5h7v2H0zM7 2h3v2h4V2h3v8h-3V8h-4v2H7z" fill="#8a8a8a" /></svg></PinCell>
                        <NameCell><NameLine>{name}<i>=</i></NameLine></NameCell>
                        <td>0</td>
                        <MutedCell>0</MutedCell>
                        <DescCell>{desc}</DescCell>
                      </tr>
                    ))}
                    <tr><NewCell colSpan={5}>&lt;new parameter&gt;</NewCell></tr>
                  </tbody>
                </ParamTable>
              </DockBody>
              <DockTabs>
                <PageTab $active $w={161}>Parameter List</PageTab>
                <PageTab $w={181}>Result Navigator</PageTab>
              </DockTabs>
            </Dock>
            <Dock>
              <PanelHeader><PanelName>Progress</PanelName><button aria-label="Close progress"><BoldX /></button></PanelHeader>
              <DockBody>
                <ProgressRow>
                  <svg width="15" height="24" viewBox="0 0 15 24" fill="none"><path d="M.5 0v12.500H15" stroke="#9a9a9a" strokeDasharray="1 1" /></svg>
                  <CstLogo />
                  <span>study_csdn.cst</span>
                </ProgressRow>
              </DockBody>
              <DockTabs>
                <PageTab $w={108} $edge="left">Messages</PageTab>
                <PageTab $active $w={108}>Progress</PageTab>
              </DockTabs>
            </Dock>
          </Docks>
        </MainColumn>
      </Workspace>

      <StatusBar>
        <StatusText>Ready</StatusText>
        <StatusButton aria-label="Zoom window"><ZoomGlyph><path d="M1 9V1h11" stroke="#d88a4d" strokeWidth="1.500" strokeDasharray="1.500 1.500" /><path d="M12 7v8M8 11h8" stroke="#c5581c" strokeWidth="1.800" /></ZoomGlyph></StatusButton>
        <StatusButton aria-label="Pan"><Small><path d="M12 2v20M2 12h20" stroke="#e08a1e" strokeWidth="2.500" /><path d="M12 0l4 5H8zM12 24l4-5H8zM0 12l5-4v8zM24 12l-5-4v8z" fill="#e08a1e" /></Small></StatusButton>
        <StatusButton $on aria-label="Rotate"><Small><circle cx="12" cy="12" r="10" fill="#8f8f8f" /><circle cx="10" cy="8" r="5" fill="#c4c4c4" /><path d="M1 11c4 5 11 5 15 1l-2-3 9-2v9l-3-2c-5 7-16 6-19-3z" fill="#e3791a" stroke="#a9530c" /></Small></StatusButton>
        <StatusButton aria-label="Dynamic zoom"><ZoomGlyph><path d="M12 5l4 4.500H8zM12 17l4-4.500H8z" fill="#c5581c" /></ZoomGlyph></StatusButton>
        <StatusButton aria-label="Rotate in plane"><Small><circle cx="12" cy="13" r="5" fill="#8f8f8f" /><path d="M4 7c-4 8 0 15 8 15s12-8 8-15" stroke="#e08a1e" strokeWidth="3.500" /><path d="M14 2h9v9z" fill="#e08a1e" /></Small></StatusButton>
        <StatusLine />
        <StatusButton aria-label="Reset view"><Small><path d="M2 2h20v20H2z" fill="#fff" stroke="#777" strokeWidth="1.500" /><path d="M6 6l4 4M18 6l-4 4M6 18l4-4M18 18l-4-4M5 9V5h4M15 5h4v4M5 15v4h4M19 15v4h-4" stroke="#d0652a" strokeWidth="1.800" /></Small></StatusButton>
        <StatusButton aria-label="Working plane"><Small><path d="M5 7h15l-3 12H1z" fill="#cf6d2c" stroke="#7a4a2c" /><path d="M1 19h16v3H1z" fill="#6b4a36" /><path d="M15 10l7-9" stroke="#444" strokeWidth="3.500" /></Small></StatusButton>
        <StatusButton $w={54} aria-label="View direction">
          <Small><path d="M12 1l10 5v12l-10 5-10-5V6zM2 6l10 5 10-5M12 11v12" fill="#f4f4f4" stroke="#7d7d7d" strokeWidth="1.800" /></Small><Caret />
        </StatusButton>
        <StatusLine />
        <StatusButton $w={32} aria-label="Plot properties"><Small><path d="M2 4h18v18H2z" fill="#fff" stroke="#666" strokeWidth="2" /><path d="M6 8v11" stroke="#444" strokeWidth="2" /><path d="M8 18l3-8 3 8 4-6" stroke="#b33" strokeWidth="1.500" /><circle cx="17" cy="7" r="6.500" fill="#35a83a" /><path d="M17 3v8M13 7h8" stroke="#fff" strokeWidth="2" /></Small></StatusButton>
        <StatusField $w={140}>Raster=1.000</StatusField>
        <StatusField $w={98} $dim>Surfaces</StatusField>
        <StatusField $w={91} $dim>Normal</StatusField>
        <StatusField $w={151} $dim>mm GHz ns K</StatusField>
        <Watermark>CSDN @邪王小剑</Watermark>
      </StatusBar>

      <DialogFrame $x={838} $y={342} $w={884} $h={882} $back aria-label="Integral Equation Solver Parameters">
        <DialogTitle $back><h2>Integral Equation Solver Parameters</h2><button aria-label="Close solver parameters"><ThinX c="#9a9a9a" s={15} /></button></DialogTitle>
        <BackBody />
      </DialogFrame>

      <DialogFrame $x={686} $y={374} $w={1189} role="dialog" aria-label="Monostatic RCS Sweep Settings">
        <DialogTitle><h2>Monostatic RCS Sweep Settings</h2><button aria-label="Close dialog"><ThinX c="#000" s={16} /></button></DialogTitle>
        <DialogBody>
          <Groups>
            <Fieldset $end={26}>
              <legend>Incident field settings</legend>
              <FieldRow $h={272}>
                <SweepList columns={["Type", "Etheta Re", "Etheta Im", "Ephi Re", "Ephi Im"]} widths={[148, 149, 148, 149, 154]} />
                <ButtonStack>
                  <Marked>
                    <PushButton $focus>Add...</PushButton>
                    <MarkBox />
                    <MarkText>13-6 入射场设置</MarkText>
                  </Marked>
                  <PushButton disabled>Edit...</PushButton>
                  <PushButton disabled>Delete</PushButton>
                </ButtonStack>
              </FieldRow>
            </Fieldset>
            <Fieldset $end={19}>
              <legend>Observation angle sweeps</legend>
              <FieldRow $h={280}>
                <SweepList columns={["Sweep", "Tmin", "Tmax", "Tstep", "Pmin", "Pmax", "Pstep"]} widths={[106, 107, 106, 107, 106, 107, 109]} />
                <ButtonStack>
                  <PushButton>Add...</PushButton>
                  <PushButton disabled>Edit...</PushButton>
                  <PushButton disabled>Delete</PushButton>
                </ButtonStack>
              </FieldRow>
            </Fieldset>
          </Groups>
          <SideButtons>
            <PushButton $h={35}>OK</PushButton>
            <PushButton $h={35}>Close</PushButton>
            <PushButton $h={35}>Help</PushButton>
          </SideButtons>
        </DialogBody>
      </DialogFrame>
    </Shell>
  );
}
